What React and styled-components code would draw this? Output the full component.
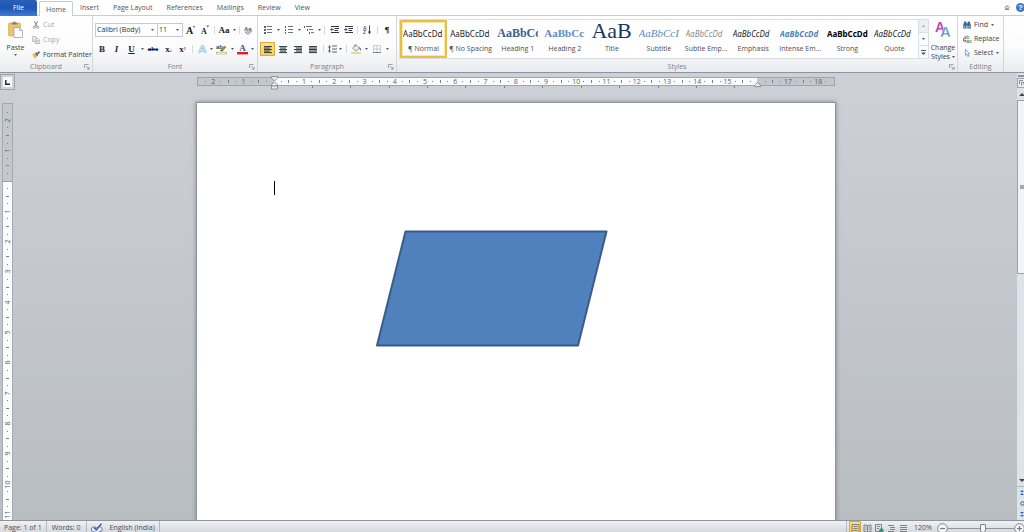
import React, { useState } from "react";
import styled, { createGlobalStyle } from "styled-components";

const GlobalStyle = createGlobalStyle`
  * { box-sizing: border-box; }
  body {
    margin: 0;
    overflow: hidden;
    font-family: "Open Sans", "Noto Sans", sans-serif;
    font-size: 7px;
    line-height: 10px;
    color: #3c4046;
  }
  button, select, input {
    font: inherit;
    color: inherit;
    margin: 0;
    padding: 0;
    border: 0;
    background: none;
  }
  svg { display: block; flex: none; overflow: visible; }
`

const serif = `"Liberation Serif", serif`

const AppBlock = styled.div`
  height: 100vh;
  display: flex;
  flex-direction: column;
  overflow: hidden;
`

/* tabs */
const TabBar = styled.nav`
  height: 16px;
  flex: none;
  display: flex;
  background: #fff;
  border-bottom: 1px solid #c9ccd0;
`
const FileTab = styled.button`
  width: 37px;
  height: 16px;
  margin-right: 2px;
  color: #fff;
  background: linear-gradient(#2b5fb8, #1e56b4 50%, #3d7ad6);
  border-radius: 0 2px 0 0;
`
const Tab = styled.button`
  height: 15px;
  padding: 1px 7px 0;
  color: #50545a;
`
const ActiveTab = styled(Tab)`
  width: 34px;
  height: 16px;
  padding: 0;
  margin: 1px 0 0 0;
  background: #fff;
  border: 1px solid #c9ccd0;
  border-bottom: 0;
  border-radius: 2px 2px 0 0;
`
const TabEnd = styled.div`
  margin-left: auto;
  margin-right: -1px;
  display: flex;
  align-items: center;
  gap: 6px;
`

/* ribbon */
const Ribbon = styled.div`
  height: 57px;
  flex: none;
  display: flex;
  padding-right: 20px;
  background: linear-gradient(#fff, #fcfcfd 55%, #e9ebee);
  border-bottom: 1px solid #8f949b;
`
const Group = styled.section`
  width: ${(p) => p.$w}px;
  flex: none;
  display: flex;
  flex-direction: column;
  border-right: 1px solid #d3d7dc;
`
const WideGroup = styled(Group)`
  width: auto;
  flex: 1;
  min-width: 0;
`
const GroupBody = styled.div`
  flex: 1;
  min-height: 0;
  display: flex;
  padding: 3px 0 0 2px;
`
const GroupFoot = styled.div`
  height: 10px;
  flex: none;
  display: grid;
  grid-template-columns: 8px 1fr 8px;
  align-items: center;
  text-align: center;
  color: #7d838b;
`
const Launcher = styled.button`
  grid-column: 3;
`
const BigButton = styled.button`
  width: ${(p) => p.$w}px;
  flex: none;
  display: flex;
  flex-direction: column;
  align-items: center;
  padding-top: 2px;
  line-height: 9px;
`
const BigLabel = styled.span`
  margin-top: 5px;
  white-space: nowrap;
  display: flex;
  flex-direction: column;
  align-items: center;
  gap: ${(p) => p.$gap || 0}px;
`
const Inline = styled.span`
  display: flex;
  align-items: center;
  gap: 2px;
`
const Stack = styled.div`
  display: flex;
  flex-direction: column;
  gap: 4px;
`
const ClipStack = styled(Stack)`
  gap: 5px;
  padding: 1px 0 0 3px;
`
const EditStack = styled(Stack)`
  padding: 1px 0 0 3px;
`
const SmallButton = styled.button`
  height: 10px;
  display: flex;
  align-items: center;
  gap: 3px;
  white-space: nowrap;
  color: ${(p) => (p.disabled ? "#a6a9ad" : "#3c4046")};
`
const Rows = styled.div`
  display: flex;
  flex-direction: column;
  gap: 5px;
  padding-top: 4px;
`
const ToolRow = styled.div`
  height: 14px;
  display: flex;
  align-items: center;
`
const Tool = styled.button`
  width: ${(p) => p.$w || 14}px;
  height: 14px;
  flex: none;
  display: flex;
  align-items: center;
  justify-content: center;
  border-radius: 1px;
  background: ${(p) => (p.$on ? "linear-gradient(#fbe08a, #fbd156)" : "none")};
  box-shadow: ${(p) => (p.$on ? "inset 0 0 0 1px #d9ab3e" : "none")};
  font-family: ${serif};
  font-size: 9px;
  font-weight: bold;
  color: #222;
`
const Drop = styled(Tool)`
  width: 6px;
`
const Sep = styled.span`
  width: ${(p) => p.$w || 6}px;
  height: 8px;
  flex: none;
  background: linear-gradient(#d5d8dc, #d5d8dc) center / 1px 100% no-repeat;
`
const AbcText = styled.s`
  font-size: 7px;
`
const Tiny = styled.span`
  font-size: 6px;
`
const Combo = styled.label`
  width: ${(p) => p.$w}px;
  height: 14px;
  flex: none;
  display: flex;
  align-items: center;
  padding-right: 3px;
  background: #fff;
  border: 1px solid #c6cad0;
  & + & { border-left: 0; }
`
const ComboSelect = styled.select`
  appearance: none;
  flex: 1;
  min-width: 0;
  height: 12px;
  padding-left: 1px;
  outline: 0;
  color: #2c3036;
`

/* style gallery */
const Gallery = styled.div`
  flex: 1;
  min-width: 0;
  height: 40px;
  display: flex;
  background: #fff;
  border: 1px solid #dadde1;
`
const StyleItem = styled.button`
  flex: 1 1 0;
  min-width: 0;
  display: flex;
  flex-direction: column;
  align-items: center;
  justify-content: flex-start;
  overflow: hidden;
  white-space: nowrap;
  border: 2px solid ${(p) => (p.$on ? "#e9bd4c" : "transparent")};
  box-shadow: ${(p) => (p.$on ? "inset 0 0 0 1px #fbe7a6" : "none")};
  border-radius: 1px;
`
const Sample = styled.span`
  width: 41px;
  height: 22px;
  line-height: ${(p) => (p.$size > 20 ? 18 : 23)}px;
  overflow: hidden;
  text-align: left;
  font-family: ${(p) => (p.$serif ? serif : `"Noto Sans", sans-serif`)};
  font-size: ${(p) => p.$size || 8}px;
  font-weight: ${(p) => (p.$bold ? "bold" : "normal")};
  font-style: ${(p) => (p.$italic ? "italic" : "normal")};
  color: ${(p) => p.$color || "#1c1c1c"};
`
const StyleName = styled.span`
  color: #4a4e54;
`
const GalleryScroll = styled.div`
  width: 10px;
  flex: none;
  display: flex;
  flex-direction: column;
  border-left: 1px solid #dadde1;
`
const ScrollStep = styled.button`
  flex: 1;
  display: flex;
  align-items: center;
  justify-content: center;
  background: ${(p) => (p.disabled ? "#eceef0" : "#fafbfc")};
  & + & { border-top: 1px solid #dadde1; }
`

/* workspace */
const Workspace = styled.div`
  flex: 1;
  min-height: 0;
  display: flex;
  background: linear-gradient(#cdd0d6, #c4c8ce 45%, #b8bdc0);
`
const LeftColumn = styled.div`
  width: 15px;
  flex: none;
  display: flex;
  flex-direction: column;
  padding-top: 1px;
`
const TabSelector = styled.button`
  width: 15px;
  height: 16px;
  flex: none;
  display: flex;
  align-items: center;
  justify-content: center;
  background: #fafafa;
  border: 1px solid #a0a4aa;
  box-shadow: inset 0 0 0 2px #cfd2d7;
`
const VRuler = styled.div`
  width: 11px;
  flex: 1;
  min-height: 0;
  margin: 13px 0 0 2px;
  padding: 5px 0 2px;
  display: flex;
  flex-direction: column;
  border: solid #a6abb3;
  border-width: 1px 1px 0;
  background: linear-gradient(#c3c7ce 77px, #9a9fa7 77px, #9a9fa7 78px, #fbfcfd 78px);
`
const HRuler = styled.div`
  height: 9px;
  flex: none;
  position: relative;
  display: flex;
  padding: 0 4px;
  border: 1px solid #a0a5ad;
  background: linear-gradient(90deg, #c3c7ce 76px, #fbfcfd 76px, #fbfcfd 559px, #c3c7ce 559px);
`
const Mark = styled.span`
  flex: 1 1 0;
  min-width: 0;
  min-height: 0;
  display: flex;
  align-items: center;
  justify-content: center;
  color: #5d6269;
`
const MarkNumber = styled.span`
  flex: none;
  line-height: 7px;
  transform: ${(p) => (p.$vertical ? "rotate(-90deg)" : "none")};
`
const Tick = styled.i`
  flex: none;
  width: ${(p) => (p.$vertical ? p.$len : 1)}px;
  height: ${(p) => (p.$vertical ? 1 : p.$len)}px;
  background: #7d828a;
`
const Indent = styled.svg`
  position: absolute;
  left: ${(p) => p.$left}px;
  top: ${(p) => p.$top}px;
`
const TabStops = styled.div`
  height: 2px;
  flex: none;
  display: flex;
  padding: 0 81px 0 96px;
`
const Canvas = styled.main`
  flex: 1;
  min-width: 0;
  display: flex;
  flex-direction: column;
  align-items: center;
  padding-top: 4px;
`
const Sheet = styled.div`
  width: 638px;
  max-width: 100%;
`
const HRulerBlock = styled(Sheet)`
  height: 26px;
  flex: none;
`
const Page = styled(Sheet)`
  flex: 1;
  min-height: 0;
  padding: 78px 77px 0;
  overflow: hidden;
  background: #fff;
  box-shadow: 0 0 0 1px #92979d, 0 0 4px 1px #7d8288;
`
const Caret = styled.div`
  width: 1px;
  height: 14px;
  background: #000;
`
const Shape = styled.svg`
  margin: 35px 0 0 102px;
`

const ScrollColumn = styled.div`
  width: 7px;
  flex: none;
  overflow: hidden;
  display: flex;
  flex-direction: column;
  padding-top: 2px;
  background: #dde3ea;
`
const SplitHandle = styled.div`
  height: 2px;
  margin-left: 1px;
  background: #8f959d;
`
const ScrollButton = styled.button`
  width: 10px;
  height: ${(p) => p.$h}px;
  flex: none;
  display: flex;
  align-items: center;
  justify-content: center;
`
const RulerToggle = styled(ScrollButton)`
  margin-top: 1px;
  background: #eceef1;
  border: 1px solid #a0a5ad;
`
const Thumb = styled.div`
  width: 10px;
  height: 39%;
  display: flex;
  align-items: center;
  justify-content: center;
  background: #f1f4f8;
  border: 1px solid #9ba2ab;
`
const Grip = styled.i`
  width: 5px;
  height: 4px;
  background: #a5abb2;
`
const Track = styled.div`
  flex: 1;
`
const BrowseButtons = styled.div`
  width: 10px;
  flex: none;
  border-top: 1px solid #b3b9c0;
`

/* status bar */
const StatusBar = styled.footer`
  height: 12px;
  flex: none;
  overflow: hidden;
  display: flex;
  align-items: flex-start;
  background: linear-gradient(#f0f1f3, #d6d9dd);
  border-top: 1px solid #8f949b;
`
const StatusItem = styled.button`
  height: 14px;
  flex: none;
  display: flex;
  align-items: center;
  padding: 0 ${(p) => p.$pad || 5}px;
  gap: 7px;
  color: #4a4e54;
  border-right: 1px solid #b7bbc1;
`
const StatusEnd = styled.div`
  height: 14px;
  margin-left: auto;
  margin-right: -1px;
  display: flex;
  align-items: center;
  border-left: 1px solid #b7bbc1;
  padding-left: 2px;
`
const ViewButton = styled(Tool)`
  width: 12px;
`
const ZoomLabel = styled.button`
  width: 28px;
  color: #4a4e54;
`
const ZoomSlider = styled.input`
  appearance: none;
  width: 66px;
  height: 12px;
  outline: 0;
  background: linear-gradient(#8f949b, #8f949b) center / 100% 1px no-repeat;
  &::-webkit-slider-thumb {
    appearance: none;
    width: 6px;
    height: 9px;
    background: #f6f7f8;
    border: 1px solid #7b8087;
    border-radius: 1px 1px 3px 3px;
  }
`
const ZoomStep = styled.button`
  flex: none;
`

const Arrow = () => (
  <svg width="3" height="2" viewBox="0 0 3 2"><path d="M0 0H3L1.5 2Z" fill="#55595f" /></svg>
)

const LauncherIcon = () => (
  <svg width="6" height="6" viewBox="0 0 6 6" fill="none" stroke="#8a9098" strokeWidth="0.8">
    <path d="M0.5 4V0.5H4.5M2.2 2.2L5 5M5.2 2.8V5.2H2.8" />
  </svg>
)

const PasteIcon = () => (
  <svg width="15" height="17" viewBox="0 0 15 17">
    <rect x="0.5" y="2" width="12" height="13" rx="1" fill="#edc36d" stroke="#d5a448" strokeWidth="0.6" />
    <path d="M3.5 3.6V1.8H5Q6.5 -0.6 8 1.8H9.5V3.6Z" fill="#7c8086" />
    <path d="M6 6.5H11.5L14.5 9.5V16.5H6Z" fill="#fafcff" stroke="#8d98a8" strokeWidth="0.7" />
    <path d="M11.5 6.5V9.5H14.5" fill="#dbe2ec" stroke="#8d98a8" strokeWidth="0.6" />
  </svg>
)
const CutIcon = () => (
  <svg width="8" height="8" viewBox="0 0 8 8" fill="none" stroke="#8f9398">
    <path d="M2.3 0.3L5.1 5.2M5.7 0.3L2.9 5.2" strokeWidth="1.1" />
    <circle cx="2.3" cy="6.3" r="1.1" strokeWidth="0.9" /><circle cx="5.7" cy="6.3" r="1.1" strokeWidth="0.9" />
  </svg>
)
const CopyIcon = () => (
  <svg width="8" height="8" viewBox="0 0 8 8" fill="#eceef0" stroke="#a5a9ae" strokeWidth="0.7">
    <path d="M0.5 0.5H3.5L4.8 1.8V5.5H0.5Z" /><path d="M3.2 2.6H6.2L7.6 4V7.6H3.2Z" />
    <path d="M4.2 4.5H6.5M4.2 5.9H6.5" />
  </svg>
)
const BrushIcon = () => (
  <svg width="8" height="8" viewBox="0 0 8 8">
    <path d="M0.2 3.2L3.4 2.2L5.4 5L3 7.8Q1.6 6.2 0.2 3.2Z" fill="#e9bb4d" />
    <path d="M3 2.4L4.4 1.2L6.4 3.8L5.3 5.3Z" fill="#5d6470" />
    <path d="M5 1.8L7.2 0.2L8 1.2L6.2 3.2Z" fill="#3358a8" />
  </svg>
)

// a list-like glyph: bullets or numbers on the left, lines on the right
const ListIcon = ({ numbered }) => (
  <svg width="8" height="8" viewBox="0 0 8 8" shapeRendering="crispEdges">
    {[0, 3, 6].map((y) => (
      <g key={y}>
        <rect x="0" y={y} width={numbered ? 1 : 2} height="2" fill="#3d64a8" />
        <rect x="3" y={y} width="5" height="1" fill="#6d7278" />
      </g>
    ))}
  </svg>
)
const MultiIcon = () => (
  <svg width="10" height="8" viewBox="0 0 10 8" shapeRendering="crispEdges">
    <path d="M0 0H1V2H0ZM3 3H4V5H3ZM5 6H6V8H5Z" fill="#3d64a8" />
    <path d="M2 0H8V1H2ZM5 3H9V4H5ZM7 6H10V7H7Z" fill="#6d7278" />
  </svg>
)
const IndentIcon = ({ right }) => (
  <svg width="9" height="8" viewBox="0 0 9 8">
    <path d="M1 0.5H9M4.5 2.5H9M4.5 4.5H8M1 6.5H9" stroke="#33373d" strokeWidth="1" />
    <path d={right ? "M3.6 3.5L1.4 1.6V2.9H0V4.1H1.4V5.4Z" : "M0 3.5L2.2 1.6V2.9H3.8V4.1H2.2V5.4Z"} fill="#2f5fb5" />
  </svg>
)
const SortIcon = () => (
  <svg width="9" height="10" viewBox="0 0 9 10">
    <text x="0" y="4.6" fontSize="5" fontFamily="Liberation Sans" fontWeight="bold" fill="#3560b0">A</text>
    <text x="0" y="9.4" fontSize="5" fontFamily="Liberation Sans" fontWeight="bold" fill="#8a3a4a">Z</text>
    <path d="M6.5 0.5V8" stroke="#333" strokeWidth="0.9" /><path d="M4.9 6.6H8.1L6.5 9.2Z" fill="#333" />
  </svg>
)
const alignLines = {
  left: [[0, 8], [0, 6], [0, 8], [0, 6], [0, 8]],
  center: [[0, 8], [1, 6], [0, 8], [1, 6], [0, 8]],
  right: [[0, 8], [2, 6], [0, 8], [2, 6], [0, 8]],
  justify: [[0, 8], [0, 8], [0, 8], [0, 8], [0, 8]],
}
const AlignIcon = ({ kind }) => (
  <svg width="8" height="7" viewBox="0 0 8 7">
    {alignLines[kind].map(([x, w], i) => (
      <rect key={i} x={x} y={i * 1.5} width={w} height="1.1" fill="#3f444a" />
    ))}
  </svg>
)
const SpacingIcon = () => (
  <svg width="9" height="8" viewBox="0 0 9 8">
    <path d="M1.5 0L3 2.4H2V5.6H3L1.5 8L0 5.6H1V2.4H0Z" fill="#3d64a8" />
    <path d="M4 1H9M4 4H9M4 7H9" stroke="#5a5f66" strokeWidth="1" />
  </svg>
)
const BucketIcon = () => (
  <svg width="11" height="10" viewBox="0 0 11 10">
    <path d="M1.6 4.2L5.2 0.8L8.6 4.2L5 7.2Z" fill="#e8edf4" stroke="#5c6b80" strokeWidth="0.7" />
    <path d="M8 3Q10.6 4 9.9 7Q8.8 5.8 8.4 4.4Z" fill="#3a69bd" />
    <path d="M4 3V0.4" stroke="#5c6b80" strokeWidth="0.7" />
    <rect x="0" y="8" width="10" height="2" fill="#e3dd93" />
  </svg>
)
const BorderIcon = () => (
  <svg width="8" height="8" viewBox="0 0 8 8" fill="none" stroke="#a7abb1" strokeWidth="0.8">
    <path d="M0.5 0.5H7.5V7.5M0.5 0.5V7.5M4 0.5V7.5M0.5 4H7.5" strokeDasharray="1.2 0.5" />
    <path d="M0 7.5H8" stroke="#62676e" />
  </svg>
)
const ClearIcon = () => (
  <svg width="9" height="9" viewBox="0 0 9 9">
    <text x="0" y="4.8" fontSize="6" fontFamily="Liberation Sans" fill="#4d5a70">Aa</text>
    <path d="M1 6.4L4.6 3.6L7.6 5.4L4 8.6Z" fill="#b4c4e2" stroke="#6f80a0" strokeWidth="0.6" />
  </svg>
)
const GlowIcon = () => (
  <svg width="9" height="9" viewBox="0 0 9 9" fill="none">
    <path d="M1 8L4.2 1H4.8L8 8M2.6 5.6H6.4" stroke="#8fc0e6" strokeWidth="2.2" strokeLinejoin="round" />
    <path d="M1 8L4.2 1H4.8L8 8M2.6 5.6H6.4" stroke="#f6fbff" strokeWidth="0.7" />
  </svg>
)
const HighlightIcon = () => (
  <svg width="11" height="10" viewBox="0 0 11 10">
    <text x="0" y="5" fontSize="6" fontFamily="Liberation Sans" fontWeight="bold" fill="#444">ab</text>
    <path d="M4.2 7L8.2 1.8L10.4 3L6.4 7.4Z" fill="#8a8f30" />
    <path d="M4.2 7L5.2 5.7L6.8 6.9Z" fill="#333" />
    <rect x="0.3" y="8.2" width="10" height="1.8" fill="#fff" stroke="#9aa070" strokeWidth="0.6" />
  </svg>
)
const FontColorIcon = () => (
  <svg width="11" height="11" viewBox="0 0 11 11">
    <text x="5.5" y="7" textAnchor="middle" fontSize="9" fontFamily="Liberation Serif" fontWeight="bold" fill="#2d5594">A</text>
    <rect x="0" y="8" width="11" height="2.4" fill="#e02020" />
  </svg>
)
const ChangeStylesIcon = () => (
  <svg width="16" height="17" viewBox="0 0 16 17">
    <text x="0" y="11" fontSize="14" fontFamily="Liberation Sans" fontWeight="bold" fill="#b04fb4">A</text>
    <text x="5" y="16" fontSize="15" fontFamily="Liberation Sans" fontWeight="bold" fill="#4a86cf" stroke="#fff" strokeWidth="0.4">A</text>
  </svg>
)
const FindIcon = () => (
  <svg width="8" height="8" viewBox="0 0 8 8" fill="#3e6398">
    <path d="M1.4 0.6H3.2L3.6 3.4V7.4H0.2V4Z" /><path d="M4.8 0.6H6.6L7.8 4V7.4H4.4V3.4Z" />
    <rect x="3" y="2.4" width="2" height="2" /><path d="M1 5H2.6V6.6H1ZM5.4 5H7V6.6H5.4Z" fill="#a9c1e2" />
  </svg>
)
const ReplaceIcon = () => (
  <svg width="8" height="8" viewBox="0 0 8 8">
    <text x="0.8" y="3.6" fontSize="5" fontFamily="Liberation Sans" fill="#555">ab</text>
    <text x="3.2" y="7.8" fontSize="5" fontFamily="Liberation Sans" fontWeight="bold" fill="#3c8a5c">ac</text>
    <path d="M0.6 3.4V6H2.6M1.8 5L2.9 6L1.8 7" fill="none" stroke="#333" strokeWidth="0.7" />
  </svg>
)
const SelectIcon = () => (
  <svg width="8" height="8" viewBox="0 0 8 8">
    <path d="M2.4 0.4V6.4L3.8 5.2L4.8 7.6L5.8 7.1L4.8 4.9H6.6Z" fill="#fff" stroke="#5d7fae" strokeWidth="0.7" />
  </svg>
)
const ProofIcon = () => (
  <svg width="12" height="10" viewBox="0 0 12 10">
    <path d="M0.5 5L3 3.6L6 5L9 3.6L11 5V8L6 9.6L0.5 8Z" fill="#e6ecf5" stroke="#5a74a8" strokeWidth="0.8" />
    <path d="M3 4.5L5.3 7L10.5 0.6" fill="none" stroke="#2f57b0" strokeWidth="1.4" />
  </svg>
)
const viewPaths = [
  ["Print Layout", "M1 0.5H8V8.5H1ZM2.4 2.5H6.6M2.4 4.5H6.6M2.4 6.5H6.6"],
  ["Full Screen Reading", "M4.5 1.5L1 0.8V7.5L4.5 8.3L8 7.5V0.8L4.5 1.5V8.3M2 3H3.5M2 5H3.5M5.5 3H7M5.5 5H7"],
  ["Web Layout", "M0.5 0.5H6.5V7.5H0.5ZM2 2.5H5M2 4.5H4"],
  ["Outline", "M1 1.5H7M3 3.5H8M3 5.5H8M1 7.5H7"],
  ["Draft", "M1 1.5H8M1 3.5H8M1 5.5H8M1 7.5H8"],
]
const ViewIcon = ({ d, globe }) => (
  <svg width="9" height="9" viewBox="0 0 9 9">
    <path d={d} fill="none" stroke="#666b72" strokeWidth="0.8" />
    {globe && <circle cx="6.4" cy="6.4" r="2.2" fill="#3f8f7c" />}
  </svg>
)
const RoundSign = ({ plus }) => (
  <svg width="11" height="11" viewBox="0 0 11 11" fill="none" stroke="#767b82">
    <circle cx="5.5" cy="5.5" r="4.8" fill="#f4f5f6" strokeWidth="0.9" />
    <path d={plus ? "M3 5.5H8M5.5 3V8" : "M3 5.5H8"} strokeWidth="1.2" />
  </svg>
)

const tabs = ["Insert", "Page Layout", "References", "Mailings", "Review", "View"]

const styleItems = [
  { name: "¶ Normal", text: "AaBbCcDd" },
  { name: "¶ No Spacing", text: "AaBbCcDd" },
  { name: "Heading 1", text: "AaBbCc", serif: true, size: 12, bold: true, color: "#365f91" },
  { name: "Heading 2", text: "AaBbCc", serif: true, size: 11, bold: true, color: "#5b8bc4" },
  { name: "Title", text: "AaB", serif: true, size: 22, color: "#17365d" },
  { name: "Subtitle", text: "AaBbCcI", serif: true, size: 11, italic: true, color: "#5b8bc4" },
  { name: "Subtle Emp...", text: "AaBbCcDd", italic: true, color: "#8a8a8a" },
  { name: "Emphasis", text: "AaBbCcDd", italic: true },
  { name: "Intense Em...", text: "AaBbCcDd", italic: true, bold: true, color: "#4f81bd" },
  { name: "Strong", text: "AaBbCcDd", bold: true, color: "#000" },
  { name: "Quote", text: "AaBbCcDd", italic: true },
]

// quarter-unit marks, numbers on whole units
function RulerMarks({ from, to, skip = [], vertical }) {
  const marks = []
  for (let q = from; q <= to; q++) {
    let content = null
    if (!skip.includes(q)) {
      if (q % 4 === 0) content = <MarkNumber $vertical={vertical}>{Math.abs(q / 4)}</MarkNumber>
      else content = <Tick $vertical={vertical} $len={q % 2 === 0 ? 3 : 1} />
    }
    marks.push(<Mark key={q}>{content}</Mark>)
  }
  return marks
}

const Foot = ({ children, plain }) => (
  <GroupFoot>
    <i />
    <span>{children}</span>
    {!plain && <Launcher aria-label={`${children} options`}><LauncherIcon /></Launcher>}
  </GroupFoot>
)

const DropButton = ({ label }) => <Drop aria-label={label}><Arrow /></Drop>

function FontGroup() {
  return (
    <Group $w={165}>
      <GroupBody>
        <Rows>
          <ToolRow>
            <Combo $w={63}>
              <ComboSelect aria-label="Font"><option>Calibri (Body)</option></ComboSelect>
              <Arrow />
            </Combo>
            <Combo $w={25}>
              <ComboSelect aria-label="Font size"><option>11</option></ComboSelect>
              <Arrow />
            </Combo>
            <Tool $w={16} aria-label="Grow font">
              <svg width="10" height="10" viewBox="0 0 10 10">
                <text x="0" y="9" fontSize="10" fontFamily="Liberation Serif" fontWeight="bold" fill="#222">A</text>
                <path d="M6.6 2.2L8 0.4L9.4 2.2Z" fill="#3560b0" />
              </svg>
            </Tool>
            <Tool $w={12} aria-label="Shrink font">
              <svg width="8" height="10" viewBox="0 0 8 10">
                <text x="0" y="9" fontSize="8" fontFamily="Liberation Serif" fontWeight="bold" fill="#222">A</text>
                <path d="M5.4 0.6H8.2L6.8 2.4Z" fill="#3560b0" />
              </svg>
            </Tool>
            <Sep />
            <Tool>Aa</Tool>
            <DropButton label="Change case" />
            <Sep $w={4} />
            <Tool $w={15} aria-label="Clear formatting"><ClearIcon /></Tool>
          </ToolRow>
          <ToolRow>
            <Tool>B</Tool>
            <Tool $w={15}><em>I</em></Tool>
            <Tool $w={15}><u>U</u></Tool>
            <DropButton label="Underline style" />
            <Tool $w={16}><AbcText>abc</AbcText></Tool>
            <Tool $w={15}>x<Tiny>₂</Tiny></Tool>
            <Tool $w={13}>x<Tiny>²</Tiny></Tool>
            <Sep $w={7} />
            <Tool $w={12} aria-label="Text effects"><GlowIcon /></Tool>
            <DropButton label="Text effects menu" />
            <Tool $w={15} aria-label="Highlight"><HighlightIcon /></Tool>
            <DropButton label="Highlight colour" />
            <Tool aria-label="Font colour"><FontColorIcon /></Tool>
            <DropButton label="Font colour menu" />
          </ToolRow>
        </Rows>
      </GroupBody>
      <Foot>Font</Foot>
    </Group>
  )
}

function ParagraphGroup({ align, setAlign }) {
  return (
    <Group $w={139}>
      <GroupBody>
        <Rows>
          <ToolRow>
            <Tool $w={15} aria-label="Bullets"><ListIcon /></Tool>
            <DropButton label="Bullet library" />
            <Tool $w={15} aria-label="Numbering"><ListIcon numbered /></Tool>
            <DropButton label="Numbering library" />
            <Tool aria-label="Multilevel list"><MultiIcon /></Tool>
            <DropButton label="List library" />
            <Sep $w={5} />
            <Tool aria-label="Decrease indent"><IndentIcon /></Tool>
            <Tool aria-label="Increase indent"><IndentIcon right /></Tool>
            <Sep $w={5} />
            <Tool $w={15} aria-label="Sort"><SortIcon /></Tool>
            <Sep $w={5} />
            <Tool>¶</Tool>
          </ToolRow>
          <ToolRow>
            {["left", "center", "right", "justify"].map((kind) => (
              <Tool key={kind} $w={15} $on={align === kind} aria-label={`Align ${kind}`} onClick={() => setAlign(kind)}>
                <AlignIcon kind={kind} />
              </Tool>
            ))}
            <Sep $w={7} />
            <Tool $w={10} aria-label="Line spacing"><SpacingIcon /></Tool>
            <DropButton label="Line spacing menu" />
            <Sep $w={7} />
            <Tool $w={13} aria-label="Shading"><BucketIcon /></Tool>
            <DropButton label="Shading colour" />
            <Tool $w={15} aria-label="Borders"><BorderIcon /></Tool>
            <DropButton label="Border menu" />
          </ToolRow>
        </Rows>
      </GroupBody>
      <Foot>Paragraph</Foot>
    </Group>
  )
}

function App() {
  const [align, setAlign] = useState("left")
  const [current, setCurrent] = useState("¶ Normal")
  const [zoom, setZoom] = useState(53)

  return (
    <>
      <GlobalStyle />
      <AppBlock>
        <TabBar>
          <FileTab>File</FileTab>
          <ActiveTab>Home</ActiveTab>
          {tabs.map((t) => <Tab key={t}>{t}</Tab>)}
          <TabEnd>
            <button aria-label="Minimize ribbon">
              <svg width="6" height="5" viewBox="0 0 6 5" fill="none" stroke="#6f747b" strokeWidth="0.9">
                <path d="M0.5 2.6L3 0.6L5.5 2.6M1 4.4L3 2.8L5 4.4Z" />
              </svg>
            </button>
            <button aria-label="Help">
              <svg width="9" height="9" viewBox="0 0 9 9">
                <circle cx="4.5" cy="4.5" r="4.5" fill="#3d78c4" />
                <text x="4.5" y="7.2" textAnchor="middle" fontSize="8" fontFamily="Liberation Sans" fontWeight="bold" fill="#fff">?</text>
              </svg>
            </button>
          </TabEnd>
        </TabBar>

        <Ribbon>
          <Group $w={93}>
            <GroupBody>
              <BigButton $w={27}>
                <PasteIcon />
                <BigLabel $gap={2}>Paste<Arrow /></BigLabel>
              </BigButton>
              <ClipStack>
                <SmallButton disabled><CutIcon />Cut</SmallButton>
                <SmallButton disabled><CopyIcon />Copy</SmallButton>
                <SmallButton><BrushIcon />Format Painter</SmallButton>
              </ClipStack>
            </GroupBody>
            <Foot>Clipboard</Foot>
          </Group>

          <FontGroup />
          <ParagraphGroup align={align} setAlign={setAlign} />

          <WideGroup>
            <GroupBody>
              <Gallery>
                {styleItems.map((s) => (
                  <StyleItem key={s.name} $on={current === s.name} onClick={() => setCurrent(s.name)}>
                    <Sample $serif={s.serif} $size={s.size} $bold={s.bold} $italic={s.italic} $color={s.color}>{s.text}</Sample>
                    <StyleName>{s.name}</StyleName>
                  </StyleItem>
                ))}
                <GalleryScroll>
                  <ScrollStep disabled aria-label="Previous styles">
                    <svg width="3" height="2" viewBox="0 0 3 2"><path d="M0 2H3L1.5 0Z" fill="#a5a9ae" /></svg>
                  </ScrollStep>
                  <ScrollStep aria-label="Next styles"><Arrow /></ScrollStep>
                  <ScrollStep aria-label="More styles">
                    <svg width="5" height="5" viewBox="0 0 5 5"><path d="M0 0H5V1H0ZM0 2.4H5L2.5 5Z" fill="#55595f" /></svg>
                  </ScrollStep>
                </GalleryScroll>
              </Gallery>
              <BigButton $w={28}>
                <ChangeStylesIcon />
                <BigLabel>Change<Inline>Styles <Arrow /></Inline></BigLabel>
              </BigButton>
            </GroupBody>
            <Foot>Styles</Foot>
          </WideGroup>

          <Group $w={46}>
            <GroupBody>
              <EditStack>
                <SmallButton><FindIcon />Find <Arrow /></SmallButton>
                <SmallButton><ReplaceIcon />Replace</SmallButton>
                <SmallButton><SelectIcon />Select <Arrow /></SmallButton>
              </EditStack>
            </GroupBody>
            <Foot plain>Editing</Foot>
          </Group>
        </Ribbon>

        <Workspace>
          <LeftColumn>
            <TabSelector aria-label="Tab type">
              <svg width="5" height="5" viewBox="0 0 5 5"><path d="M0.8 0V4.2H5" fill="none" stroke="#222" strokeWidth="1.4" /></svg>
            </TabSelector>
            <VRuler>
              <RulerMarks vertical from={-9} to={44} skip={[0]} />
            </VRuler>
          </LeftColumn>

          <Canvas>
            <HRulerBlock>
              <HRuler>
                <RulerMarks from={-9} to={73} skip={[0, 64]} />
                <Indent $left={73} $top={-2} width="7" height="14" viewBox="0 0 7 14" fill="#e9ebee" stroke="#7b8087" strokeWidth="0.8">
                  <path d="M0.5 0.5H6.5V2L3.5 5L0.5 2Z" />
                  <path d="M3.5 6L6.5 8.6V10H0.5V8.6Z" />
                  <path d="M0.5 10H6.5V13H0.5Z" />
                </Indent>
                <Indent $left={556} $top={4} width="7" height="6" viewBox="0 0 7 6" fill="#e9ebee" stroke="#7b8087" strokeWidth="0.8">
                  <path d="M3.5 0.5L6.5 3.2V4.6H0.5V3.2Z" />
                </Indent>
              </HRuler>
              <TabStops>
                {Array.from({ length: 12 }, (_, i) => <Mark key={i}><Tick $len={2} /></Mark>)}
              </TabStops>
            </HRulerBlock>
            <Page>
              <Caret />
              <Shape width="232" height="118" viewBox="0 0 232 118">
                <path d="M29.5 1.5H230.5L202 115.5H1Z" fill="#4f81bd" stroke="#385d8a" strokeWidth="2" strokeLinejoin="round" />
              </Shape>
            </Page>
          </Canvas>

          <ScrollColumn>
            <SplitHandle />
            <RulerToggle $h={10} aria-label="View ruler">
              <svg width="6" height="6" viewBox="0 0 6 6" fill="none" stroke="#6a7078" strokeWidth="0.8">
                <path d="M0.5 4V0.5H4M2.5 5.5V2.5H5.5M4 4H5.5" />
              </svg>
            </RulerToggle>
            <ScrollButton $h={12} aria-label="Scroll up">
              <svg width="6" height="3" viewBox="0 0 6 3"><path d="M0 3L3 0L6 3Z" fill="#40454b" /></svg>
            </ScrollButton>
            <Thumb><Grip /></Thumb>
            <Track />
            <ScrollButton $h={12} aria-label="Scroll down">
              <svg width="6" height="3" viewBox="0 0 6 3"><path d="M0 0L3 3L6 0Z" fill="#40454b" /></svg>
            </ScrollButton>
            <BrowseButtons>
              <ScrollButton $h={11} aria-label="Previous page">
                <svg width="4" height="5" viewBox="0 0 4 5"><path d="M0 2L2 0L4 2ZM0 5L2 3L4 5Z" fill="#2f66c4" /></svg>
              </ScrollButton>
              <ScrollButton $h={11} aria-label="Browse object">
                <svg width="5" height="5" viewBox="0 0 5 5"><circle cx="2.5" cy="2.5" r="1.8" fill="none" stroke="#555a61" /></svg>
              </ScrollButton>
              <ScrollButton $h={11} aria-label="Next page">
                <svg width="4" height="5" viewBox="0 0 4 5"><path d="M0 0L2 2L4 0ZM0 3L2 5L4 3Z" fill="#2f66c4" /></svg>
              </ScrollButton>
            </BrowseButtons>
          </ScrollColumn>
        </Workspace>

        <StatusBar>
          <StatusItem $pad={4}>Page: 1 of 1</StatusItem>
          <StatusItem>Words: 0</StatusItem>
          <StatusItem $pad={4}><ProofIcon />English (India)</StatusItem>
          <StatusEnd>
            {viewPaths.map(([label, d], i) => (
              <ViewButton key={label} $on={i === 0} aria-label={label}><ViewIcon d={d} globe={i === 2} /></ViewButton>
            ))}
            <ZoomLabel>120%</ZoomLabel>
            <ZoomStep aria-label="Zoom out"><RoundSign /></ZoomStep>
            <ZoomSlider type="range" aria-label="Zoom" value={zoom} onChange={(e) => setZoom(e.target.value)} />
            <ZoomStep aria-label="Zoom in"><RoundSign plus /></ZoomStep>
          </StatusEnd>
        </StatusBar>
      </AppBlock>
    </>
  )
}

export default App
